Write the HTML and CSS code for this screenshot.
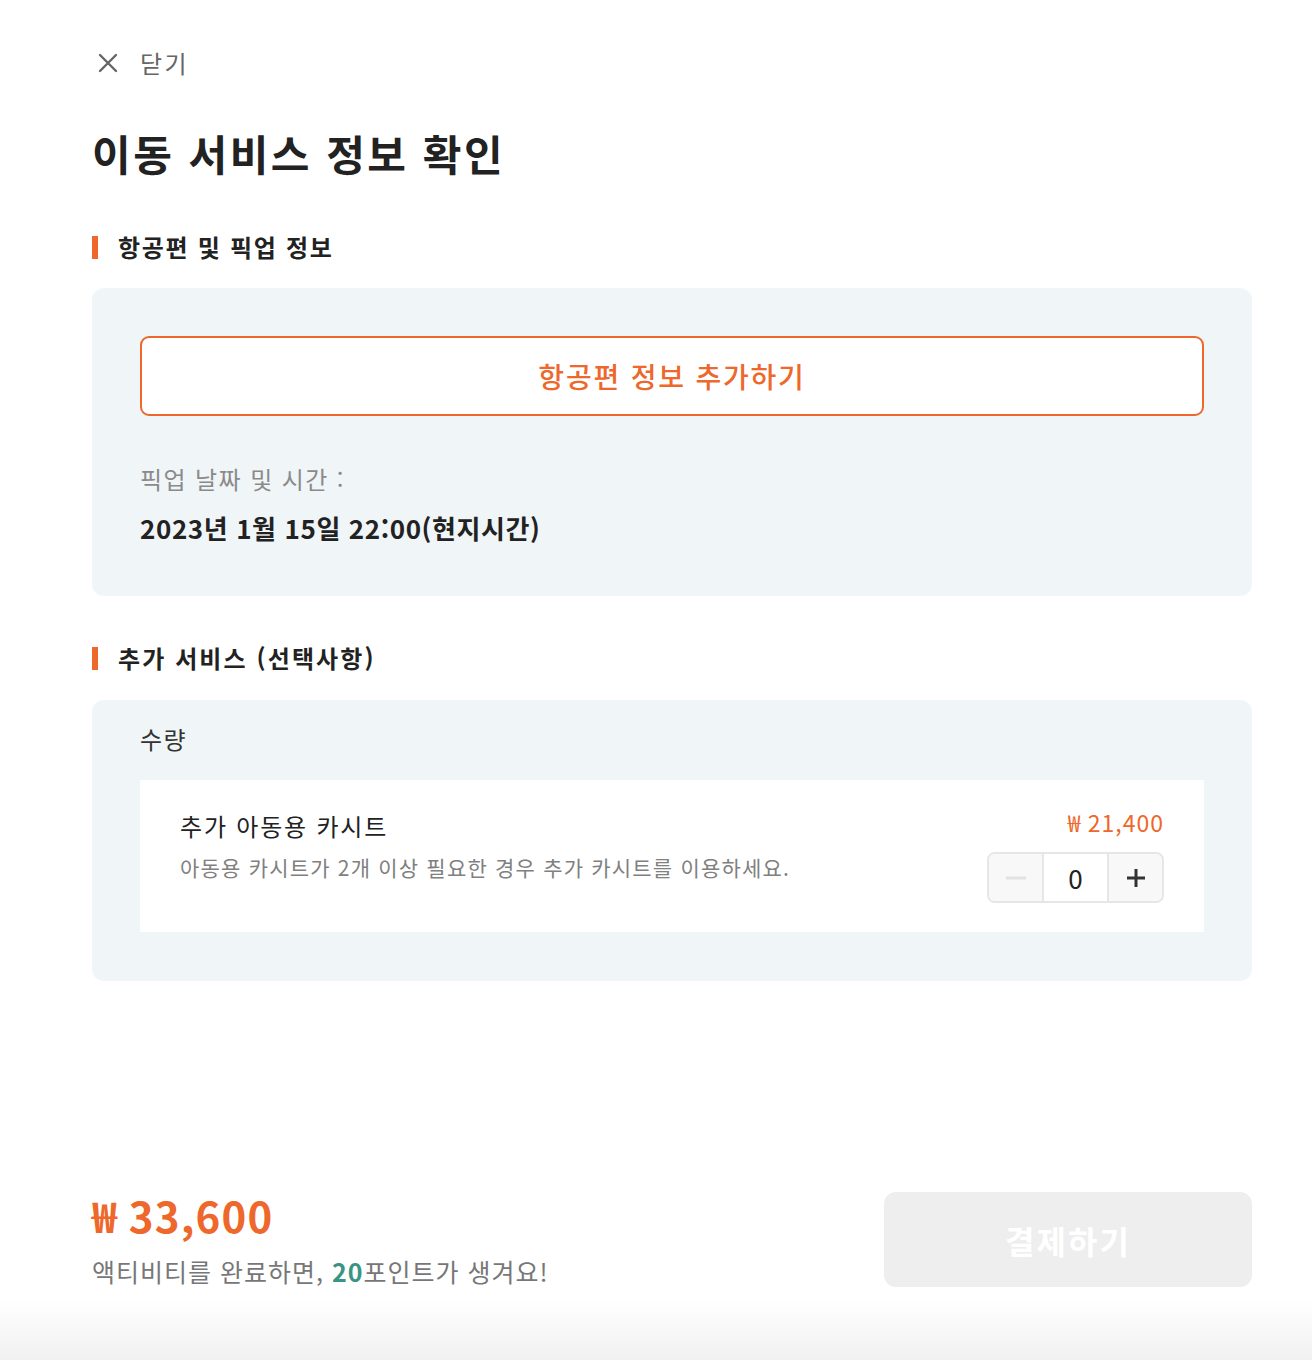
FILE: index.html
```html
<!DOCTYPE html>
<html lang="ko">
<head>
<meta charset="utf-8">
<title>이동 서비스 정보 확인</title>
<link rel="stylesheet" href="styles.css">
</head>
<body>
<div class="page">
  <div class="close">
    <svg class="close-icon" width="22" height="22" viewBox="0 0 22 22"><path d="M3 3 L19 19 M19 3 L3 19" stroke="#666" stroke-width="2.4" stroke-linecap="round" fill="none"/></svg>
    <span>닫기</span>
  </div>
  <h1 class="title">이동 서비스 정보 확인</h1>

  <h2 class="section-head">항공편 및 픽업 정보</h2>
  <div class="box box-flight">
    <button class="add-btn">항공편 정보 추가하기</button>
    <div class="pickup-label">픽업 날짜 및 시간 :</div>
    <div class="pickup-value">2023년 1월 15일 22:00(현지시간)</div>
  </div>

  <h2 class="section-head section-head-2">추가 서비스 (선택사항)</h2>
  <div class="box box-extra">
    <div class="qty-label">수량</div>
    <div class="card">
      <div class="card-info">
        <div class="card-title">추가 아동용 카시트</div>
        <div class="card-desc">아동용 카시트가 2개 이상 필요한 경우 추가 카시트를 이용하세요.</div>
      </div>
      <div class="card-side">
        <div class="card-price">₩ 21,400</div>
        <div class="stepper">
          <span class="step step-minus"><svg width="20" height="4" viewBox="0 0 20 4"><rect width="20" height="3" y="0.5" fill="#e2e2e2"/></svg></span>
          <span class="step-val">0</span>
          <span class="step step-plus"><svg width="20" height="20" viewBox="0 0 20 20"><path d="M10 1 V19 M1 10 H19" stroke="#333" stroke-width="3" fill="none"/></svg></span>
        </div>
      </div>
    </div>
  </div>

  <div class="footer">
    <div class="total">
      <div class="total-price">₩ 33,600</div>
      <div class="total-msg">액티비티를 완료하면, <b class="points">20</b>포인트가 생겨요!</div>
    </div>
    <button class="pay-btn">결제하기</button>
  </div>
</div>
<div class="bottom-fade"></div>
</body>
</html>
```

FILE: styles.css
```css
* { box-sizing: border-box; }
html, body { margin: 0; padding: 0; background: #fff; }
body {
  font-family: "Noto Sans CJK KR", "Noto Sans", sans-serif;
  color: #222;
  height: 1360px;
  overflow: hidden;
}
.page {
  width: 1160px;
  margin-left: 92px;
}
.close {
  padding-top: 47px;
  height: 79px;
  display: flex;
  align-items: center;
  line-height: 32px;
  font-size: 24px;
  color: #666;
  letter-spacing: 2.5px;
}
.close-icon { margin-left: 5px; margin-right: 21px; }
.title {
  margin: 45px 0 0;
  font-size: 42px;
  line-height: 58px;
  font-weight: 700;
  color: #222;
  letter-spacing: 2.5px;
}
.section-head {
  margin: 48px 0 0;
  font-size: 24px;
  line-height: 34px;
  font-weight: 700;
  color: #222;
  display: flex;
  align-items: center;
  letter-spacing: 1.7px;
}
.section-head::before {
  content: "";
  width: 6px;
  height: 23px;
  background: #ee672b;
  margin-right: 20px;
}
.section-head-2 { margin-top: 45px; letter-spacing: 2.1px; }
.box {
  background: #f0f5f8;
  border-radius: 12px;
  margin-top: 24px;
  padding: 48px 48px 49px;
}
.box-extra { margin-top: 25px; padding-top: 22px; }
.add-btn {
  display: block;
  width: 100%;
  height: 80px;
  border: 2px solid #ee672b;
  border-radius: 9px;
  background: #fff;
  color: #ee672b;
  font-family: inherit;
  font-size: 28px;
  font-weight: 500;
  letter-spacing: 1.8px;
  cursor: pointer;
}
.pickup-label {
  margin-top: 46px;
  font-size: 24px;
  line-height: 34px;
  color: #8a8a8a;
  letter-spacing: 1.4px;
}
.pickup-value {
  margin-top: 13px;
  font-size: 26px;
  line-height: 38px;
  font-weight: 700;
  color: #222;
  letter-spacing: 0.6px;
}
.qty-label {
  font-size: 24px;
  line-height: 34px;
  color: #333;
  letter-spacing: 1.5px;
}
.card {
  margin-top: 24px;
  height: 152px;
  background: #fff;
  padding: 27px 40px 0;
  display: flex;
  justify-content: space-between;
  align-items: flex-start;
}
.card-title {
  font-size: 24px;
  line-height: 34px;
  color: #222;
  margin-top: 2px;
  letter-spacing: 1.8px;
}
.card-desc {
  margin-top: 9px;
  font-size: 21px;
  line-height: 30px;
  color: #808080;
  letter-spacing: 1.2px;
}
.card-side {
  display: flex;
  flex-direction: column;
  align-items: flex-end;
}
.card-price {
  font-size: 23px;
  line-height: 30px;
  color: #ee672b;
  letter-spacing: 1px;
}
.stepper {
  margin-top: 15px;
  display: flex;
  height: 51px;
  border: 2px solid #e6e6e6;
  border-radius: 8px;
  overflow: hidden;
}
.step {
  width: 53px;
  background: #f8f8f8;
  display: flex;
  align-items: center;
  justify-content: center;
}
.step-val {
  width: 67px;
  background: #fff;
  border-left: 2px solid #e6e6e6;
  border-right: 2px solid #e6e6e6;
  display: flex;
  align-items: center;
  justify-content: center;
  font-size: 26px;
  color: #222;
}
.footer {
  margin-top: 209px;
  display: flex;
  justify-content: space-between;
  align-items: flex-start;
}
.total-price {
  font-size: 42px;
  line-height: 50px;
  font-weight: 700;
  color: #ee672b;
  letter-spacing: 1.2px;
}
.total-msg {
  margin-top: 13px;
  font-size: 25px;
  line-height: 36px;
  color: #777;
  letter-spacing: 1px;
}
.points { color: #3a9484; font-weight: 700; }
.pay-btn {
  margin-top: 2px;
  width: 368px;
  height: 95px;
  border: none;
  border-radius: 12px;
  background: #eeeeee;
  color: #fff;
  font-family: inherit;
  font-size: 32px;
  font-weight: 700;
  letter-spacing: 2px;
}
.bottom-fade {
  margin-top: 11px;
  height: 60px;
  background: linear-gradient(to bottom, #ffffff 0%, #f1f1f1 100%);
}
```
